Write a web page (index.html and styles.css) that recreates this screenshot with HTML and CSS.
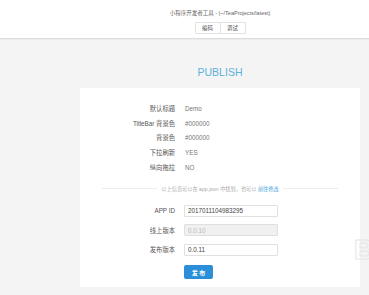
FILE: index.html
```html
<!DOCTYPE html>
<html lang="zh-CN">
<head>
  <meta charset="UTF-8">
  <meta name="viewport" content="width=device-width, initial-scale=1.0">
  <title>小程序开发者工具 - 发布</title>
  <link rel="stylesheet" href="styles.css">
</head>
<body>
  <header class="topbar">
    <div class="column">
      <div class="window-title">小程序开发者工具 - (~/TeaProjects/latest)</div>
      <div class="tabs">
        <span class="tab">编码</span>
        <span class="tab">调试</span>
      </div>
    </div>
  </header>

  <main class="page">
    <div class="column">
      <h1 class="page-title">PUBLISH</h1>

      <div class="card">
        <!-- 配置信息 -->
        <div class="info-list">
          <div class="info-row"><span class="label">默认标题</span><span class="value">Demo</span></div>
          <div class="info-row"><span class="label">TitleBar 背景色</span><span class="value">#000000</span></div>
          <div class="info-row"><span class="label">背景色</span><span class="value">#000000</span></div>
          <div class="info-row"><span class="label">下拉刷新</span><span class="value">YES</span></div>
          <div class="info-row"><span class="label">纵向拖拉</span><span class="value">NO</span></div>
        </div>

        <div class="divider">
          <span>以上信息可以在 app.json 中找到，也可以 <a href="#" class="link">前往修改</a></span>
        </div>

        <!-- 发布表单 -->
        <form class="publish-form">
          <div class="form-row">
            <label class="label">APP ID</label>
            <input class="field" type="text" value="2017011104983295">
          </div>
          <div class="form-row">
            <label class="label">线上版本</label>
            <input class="field" type="text" value="0.0.10" disabled>
          </div>
          <div class="form-row">
            <label class="label">发布版本</label>
            <input class="field" type="text" value="0.0.11">
          </div>
          <div class="form-row">
            <span class="label"></span>
            <button class="publish-button" type="button">发 布</button>
          </div>
        </form>
      </div>
    </div>
  </main>

  <div class="watermark">B</div>
</body>
</html>
```

FILE: styles.css
```css
/* Estilos generales */
body {
  margin: 0;
  padding: 0;
  height: 295px;
  overflow: hidden;
  background: #f4f4f4;
  font-family: "Liberation Sans", "Noto Sans CJK SC", sans-serif;
  color: #555;
  position: relative;
}

.column {
  margin-left: 80px;
  width: 280px;
}

/* Barra superior */
.topbar {
  height: 38px;
  background: #fff;
  border-bottom: 1px solid #dcdcdc;
  box-shadow: 0 1px 0 #ececec;
}

.topbar .column {
  display: flex;
  flex-direction: column;
  align-items: center;
}

.window-title {
  margin-top: 10px;
  font-size: 5.5px;
  line-height: 7px;
  color: #666;
}

.tabs {
  display: flex;
  margin-top: 5px;
  border: 1px solid #e2e2e2;
  border-radius: 1px;
}

.tab {
  width: 24px;
  height: 10px;
  line-height: 10px;
  text-align: center;
  font-size: 5.4px;
  color: #555;
}

.tab + .tab {
  border-left: 1px solid #e2e2e2;
}

/* Contenido */
.page-title {
  margin: 0;
  padding-top: 26px;
  height: 23px;
  font-size: 10.5px;
  line-height: 14px;
  font-weight: normal;
  text-align: center;
  color: #5cb1dd;
}

.card {
  height: 199px;
  background: #fff;
  box-sizing: border-box;
  padding-top: 13px;
}

.info-row,
.form-row {
  display: flex;
  align-items: center;
  gap: 10px;
}

.info-row {
  height: 14.75px;
  font-size: 6.3px;
}

.label {
  width: 95px;
  text-align: right;
  color: #555;
  font-size: 6.3px;
}

.value {
  color: #777;
}

.divider {
  display: flex;
  align-items: center;
  margin: 8px 22px 0;
  height: 12px;
  font-size: 5.2px;
  color: #aaa;
}

.divider::before,
.divider::after {
  content: "";
  flex: 1;
  border-top: 1px solid #ececec;
}

.divider span {
  padding: 0 4px;
  white-space: nowrap;
}

.link {
  color: #4aa3d8;
  text-decoration: none;
}

.publish-form {
  margin: 6px 0 0;
}

.form-row {
  height: 19.5px;
}

.field {
  width: 94px;
  height: 12px;
  box-sizing: border-box;
  margin: 0 0 0 -1px;
  padding: 0 3px;
  border: 1px solid #e0e0e0;
  border-radius: 1px;
  background: #fff;
  font-family: "Liberation Sans", sans-serif;
  font-size: 6.3px;
  color: #444;
  outline: none;
}

.field:disabled {
  background: #f0f0f0;
  color: #bbb;
}

.publish-button {
  margin: 6px 0 0 -1px;
  width: 29px;
  height: 14px;
  padding: 0;
  border: none;
  border-radius: 2px;
  background: #2a8fd8;
  color: #fff;
  font-family: "Noto Sans CJK SC", sans-serif;
  font-size: 6px;
  font-weight: bold;
  cursor: pointer;
}

/* Marca de agua */
.watermark {
  position: absolute;
  left: 354px;
  top: 236px;
  font-size: 28px;
  font-weight: bold;
  line-height: 28px;
  color: transparent;
  -webkit-text-stroke: 1px #e6e6e6;
}
```
